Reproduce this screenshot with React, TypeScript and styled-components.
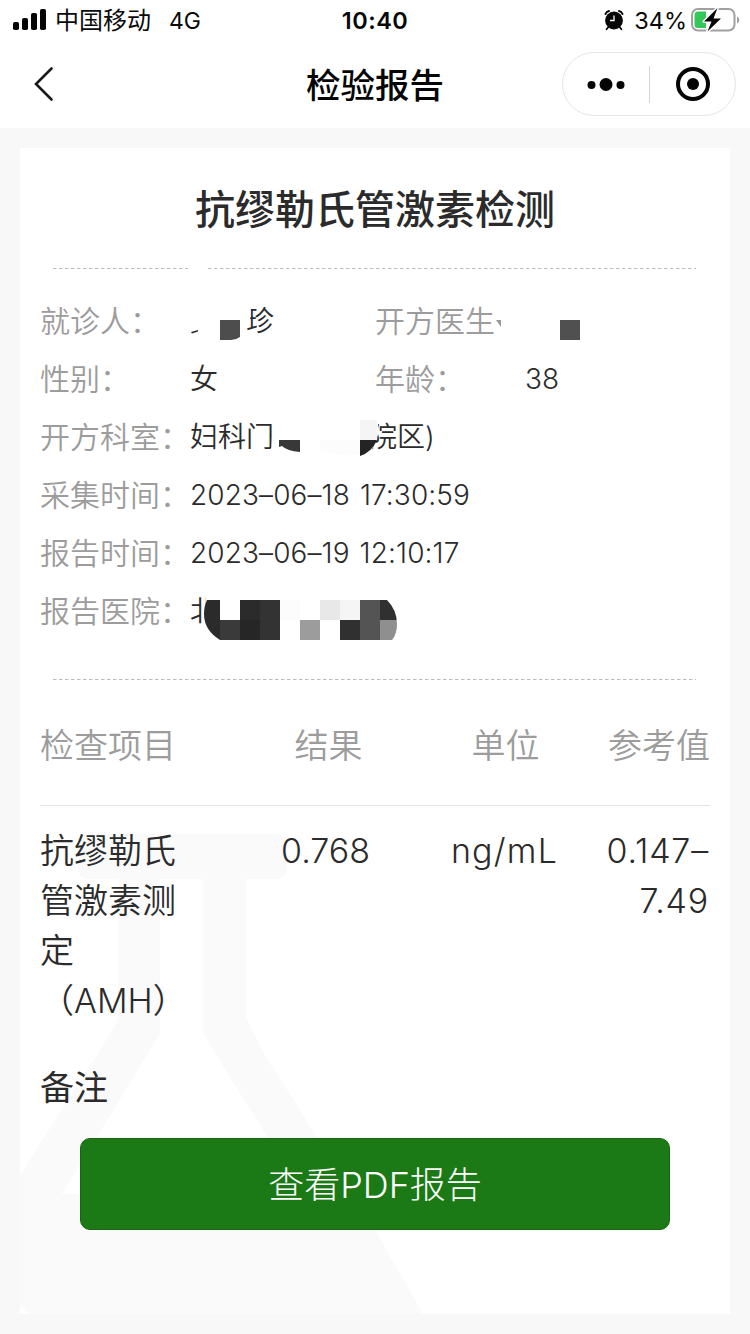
import React from "react";
import styled, { createGlobalStyle } from "styled-components";

const GlobalStyle = createGlobalStyle`
  * { box-sizing: border-box; }
  body {
    margin: 0;
    background: #f8f8f8;
    font-family: Inter, "Noto Sans CJK SC", sans-serif;
    color: #2b2b2b;
  }
`;

const Page = styled.div`
  width: 750px;
  height: 1334px;
  overflow: hidden;
  background: #f8f8f8;
`;

const Header = styled.header`
  height: 128px;
  background: #fff;
`;

const StatusBar = styled.div`
  display: grid;
  grid-template-columns: 1fr auto 1fr;
  align-items: center;
  height: 40px;
  padding: 0 10px 0 13px;
  color: #0a0a0a;
  font-size: 24px;
  line-height: 40px;
`;

const StatusSide = styled.div<{ $end?: boolean }>`
  display: flex;
  align-items: center;
  justify-content: ${(p) => (p.$end ? "flex-end" : "flex-start")};
`;

const Carrier = styled.span`
  margin: 0 18px 0 8px;
  padding-top: 2px;
  line-height: 38px;
`;

const Network = styled.span`
  padding-top: 2px;
  font-size: 23px;
  line-height: 38px;
`;

const Clock = styled.span`
  padding: 2px 3px 0 0;
  font-size: 23.5px;
  line-height: 38px;
  font-weight: 600;
  letter-spacing: 0.5px;
`;

const Percent = styled.span`
  margin: 0 4px 0 10px;
  padding-top: 2px;
  font-size: 23.5px;
  line-height: 38px;
`;

const NavBar = styled.nav`
  display: grid;
  grid-template-columns: 188px 1fr 188px;
  align-items: center;
  height: 88px;
`;

const BackButton = styled.button`
  display: flex;
  width: 60px;
  margin-left: 30px;
  padding: 0;
  border: 0;
  background: none;
`;

const NavTitle = styled.h1`
  margin: 0;
  padding-top: 3px;
  text-align: center;
  font-size: 34.5px;
  line-height: 48px;
  font-weight: 500;
  color: #060606;
`;

const Capsule = styled.div`
  display: flex;
  align-items: center;
  width: 174px;
  height: 64px;
  border: 1px solid #e6e6e6;
  border-radius: 32px;
`;

const CapsuleAction = styled.div<{ $width: number }>`
  display: flex;
  justify-content: center;
  width: ${(p) => p.$width}px;
`;

const CapsuleDivider = styled.div`
  width: 1px;
  height: 37px;
  background: #d6d6d6;
`;

const Card = styled.main`
  position: relative;
  display: flex;
  flex-direction: column;
  width: 710px;
  height: 1166px;
  margin: 20px 20px 0;
  padding: 0 20px;
  background: #fff;
`;

const Watermark = styled.svg`
  position: absolute;
  left: 0;
  bottom: 0;
`;

const ReportTitle = styled.h2`
  margin: 0;
  height: 120px;
  padding-top: 33px;
  text-align: center;
  font-size: 40px;
  line-height: 58px;
  font-weight: 500;
  color: #2b2b2b;
`;

const Divider = styled.svg`
  display: block;
  margin-left: 13px;
`;

const InfoList = styled.section`
  height: 410px;
  padding-top: 23px;
`;

const InfoRow = styled.div`
  display: flex;
  height: 58px;
  line-height: 58px;
`;

const Field = styled.div<{ $width?: number }>`
  display: flex;
  width: ${(p) => (p.$width ? p.$width + "px" : "auto")};
`;

const Label = styled.span`
  position: relative;
  flex: none;
  width: 150px;
  font-size: 30px;
  font-weight: 350;
  color: #9c9c9c;
`;

const Value = styled.span<{ $indent?: number; $stamp?: boolean }>`
  position: relative;
  padding-left: ${(p) => p.$indent ?? 0}px;
  font-size: 28px;
  font-weight: 350;
  letter-spacing: ${(p) => (p.$stamp ? 0.1 : 0)}px;
  word-spacing: ${(p) => (p.$stamp ? 2 : 0)}px;
  white-space: pre;
`;

const Mask = styled.svg`
  position: absolute;
  left: 0;
  top: 0;
`;

const TableHead = styled.div`
  display: grid;
  grid-template-columns: 200px 177px 177px 116px;
  height: 126px;
  padding-top: 41px;
  border-bottom: 1px solid #e4e4e4;
  font-size: 34px;
  line-height: 50px;
  font-weight: 350;
  color: #9c9c9c;
`;

const TableRow = styled.div`
  position: relative;
  display: grid;
  grid-template-columns: 200px 171px 187px 111px;
  height: 220px;
  padding-top: 20px;
  font-size: 34px;
  line-height: 50px;
  font-weight: 350;
`;

const Cell = styled.div<{ $align?: string; $spacing?: number }>`
  text-align: ${(p) => p.$align ?? "left"};
  padding-right: ${(p) => (p.$align ? 0 : 50)}px;
  letter-spacing: ${(p) => p.$spacing ?? 0}px;
`;

const Remark = styled.div`
  position: relative;
  height: 112px;
  padding-top: 37px;
  font-size: 34px;
  line-height: 50px;
`;

const PdfButton = styled.button`
  position: relative;
  flex: none;
  width: 590px;
  height: 92px;
  margin-left: 40px;
  padding: 0 0 4px;
  border: 1px solid #1b6417;
  border-radius: 10px;
  background: #1b7a15;
  color: #fff;
  font-family: inherit;
  font-size: 36px;
  font-weight: 300;
`;

const SignalIcon = () => (
  <svg width="34" height="22" viewBox="0 0 34 22" fill="#050505">
    <rect x="0" y="13" width="6" height="8" rx="1.8" />
    <rect x="9" y="9" width="6" height="12" rx="1.8" />
    <rect x="18" y="4" width="6" height="17" rx="1.8" />
    <rect x="27" y="0" width="6" height="21" rx="1.8" />
  </svg>
);

const AlarmIcon = () => (
  <svg width="20" height="22" viewBox="0 0 20 22">
    <circle cx="10" cy="11.5" r="8.9" fill="#080808" />
    <path d="M1.500 5a5 5 0 0 1 3.500-3M18.500 5a5 5 0 0 0-3.500-3" stroke="#080808" strokeWidth="2" fill="none" strokeLinecap="round" />
    <path d="M4.400 18 2.600 20.200M15.600 18l1.800 2.200" stroke="#080808" strokeWidth="1.800" strokeLinecap="round" />
    <path d="M10 6.500v5H6" stroke="#fff" strokeWidth="1.300" fill="none" />
  </svg>
);

const BatteryIcon = () => (
  <svg width="49" height="28" viewBox="0 0 49 28">
    <rect x="1" y="3" width="42.5" height="21.5" rx="6" fill="none" stroke="#a0a0a0" strokeWidth="2" />
    <path d="M46 10.500c3 1.200 3 5.800 0 7z" fill="#a0a0a0" />
    <path d="M7 5.600h8v16.400H7a3.500 3.500 0 0 1-3.500-3.500V9a3.500 3.500 0 0 1 3.500-3.400z" fill="#34c759" />
    <path d="M26.500 2 13 15.500h7.500L16.500 25.500 30 12.500h-7.500z" fill="#050505" stroke="#fff" strokeWidth="3" paintOrder="stroke" strokeLinejoin="round" />
  </svg>
);

const DashedDivider = ({ gap }: { gap?: boolean }) => (
  <Divider width="643" height="1" viewBox="0 0 643 1">
    <path
      d={gap ? "M0 .5H135M155 .5H643" : "M0 .5H643"}
      stroke="#bcbcbc"
      strokeDasharray="3.500 2.500"
    />
  </Divider>
);

const tiles: [number, number, string][] = [
  [10, 0, "#2b2b2b"], [50, 0, "#2b2b2b"], [70, 0, "#333"], [90, 0, "#fcfcfc"],
  [130, 0, "#e8e8e8"], [150, 0, "#f5f5f5"], [170, 0, "#545454"], [190, 0, "#303030"],
  [10, 20, "#2b2b2b"], [30, 20, "#3a3a3a"], [50, 20, "#262626"], [70, 20, "#333"],
  [110, 20, "#9c9c9c"], [150, 20, "#303030"], [170, 20, "#545454"], [190, 20, "#8f8f8f"],
];

export default function App() {
  return (
    <Page>
      <GlobalStyle />
      <Header>
        <StatusBar>
          <StatusSide>
            <SignalIcon />
            <Carrier>中国移动</Carrier>
            <Network>4G</Network>
          </StatusSide>
          <Clock>10:40</Clock>
          <StatusSide $end>
            <AlarmIcon />
            <Percent>34%</Percent>
            <BatteryIcon />
          </StatusSide>
        </StatusBar>
        <NavBar>
          <BackButton aria-label="返回">
            <svg width="26" height="36" viewBox="0 0 26 36">
              <path d="M21.500 2.500 6 18 21.500 33.500" fill="none" stroke="#1a1a1a" strokeWidth="2.600" strokeLinecap="round" />
            </svg>
          </BackButton>
          <NavTitle>检验报告</NavTitle>
          <Capsule>
            <CapsuleAction $width={86}>
              <svg width="38" height="14" viewBox="0 0 38 14" fill="#050505">
                <circle cx="4.500" cy="8" r="4" />
                <circle cx="19" cy="7.500" r="6.500" />
                <circle cx="33.500" cy="8" r="4" />
              </svg>
            </CapsuleAction>
            <CapsuleDivider />
            <CapsuleAction $width={85}>
              <svg width="36" height="36" viewBox="0 0 36 36">
                <circle cx="18" cy="18" r="15" fill="none" stroke="#050505" strokeWidth="4" />
                <circle cx="18" cy="18" r="6" fill="#050505" />
              </svg>
            </CapsuleAction>
          </Capsule>
        </NavBar>
      </Header>

      <Card>
        <Watermark width="410" height="480" viewBox="20 834 410 480">
          <path
            fill="#fafafa"
            fillRule="evenodd"
            d="M90 834H275Q287 834 287 846V867Q287 879 275 879H246V1018L262 1050L315 1134L375 1230L423 1314H30L20 1304V1175L100 1050L118 1020V879H90Q78 879 78 867V846Q78 834 90 834ZM160 879V1034L62 1194H303L213 1050L203 1032V879Z"
          />
        </Watermark>
        <ReportTitle>抗缪勒氏管激素检测</ReportTitle>
        <DashedDivider gap />
        <InfoList>
          <InfoRow>
            <Field $width={335}>
              <Label>就诊人：</Label>
              <Value $indent={56}>
                珍
                <Mask width="90" height="58" viewBox="0 0 90 58">
                  <path d="M54 10h9l-2 6-1 14-3 5h-3z" fill="#fff" />
                  <path d="M1 40l7-2v1.500l-6 2z" fill="#2b2b2b" />
                  <path d="M30 28H50V45Q46 48 41 48H30z" fill="#4d4d4d" />
                </Mask>
              </Value>
            </Field>
            <Field>
              <Label>
                开方医生
                <Mask width="150" height="58" viewBox="0 0 150 58">
                  <path d="M121 28h5v7z" fill="#999" />
                </Mask>
              </Label>
              <Value>
                <Mask width="70" height="58" viewBox="0 0 70 58">
                  <rect x="35" y="28" width="20" height="20" fill="#505050" />
                </Mask>
              </Value>
            </Field>
          </InfoRow>
          <InfoRow>
            <Field $width={335}>
              <Label>性别：</Label>
              <Value>女</Value>
            </Field>
            <Field>
              <Label>年龄：</Label>
              <Value>38</Value>
            </Field>
          </InfoRow>
          <InfoRow>
            <Label>开方科室：</Label>
            <Value>
              妇科门
              <Value $indent={95}>院区)</Value>
              <Mask width="250" height="58" viewBox="0 0 250 58">
                <path d="M83 10h8v38h-10z" fill="#fff" />
                <path d="M170 12h17q3 10 0 18l-6 14h-11z" fill="#fff" />
                <path d="M170 12h17v20h-17z" fill="#f5f5f5" />
                <path d="M89 32h21v12Q97 43 92 38l-3 1z" fill="#383838" />
                <path d="M130 32h40v15q-20 2-40-5z" fill="#fcfcfc" />
                <path d="M170 32h17q-5 12-17 16z" fill="#242424" />
              </Mask>
            </Value>
          </InfoRow>
          <InfoRow>
            <Label>采集时间：</Label>
            <Value $stamp>2023–06–18 17:30:59</Value>
          </InfoRow>
          <InfoRow>
            <Label>报告时间：</Label>
            <Value $stamp>2023–06–19 12:10:17</Value>
          </InfoRow>
          <InfoRow>
            <Label>报告医院：</Label>
            <Value>
              北
              <Mask width="220" height="58" viewBox="0 -18 220 58">
                <defs>
                  <clipPath id="pill">
                    <path d="M17 0H197Q207 10 207 24Q207 34 202 40H30Q14 30 14 14Q14 6 17 0z" />
                  </clipPath>
                </defs>
                <path d="M16-14h20V30H16z" fill="#fff" />
                <g clipPath="url(#pill)" shapeRendering="crispEdges">
                  {tiles.map(([x, y, fill]) => (
                    <rect key={`${x}-${y}`} x={x} y={y} width="20" height="20" fill={fill} />
                  ))}
                </g>
              </Mask>
            </Value>
          </InfoRow>
        </InfoList>
        <DashedDivider />
        <TableHead>
          <Cell>检查项目</Cell>
          <Cell $align="center">结果</Cell>
          <Cell $align="center">单位</Cell>
          <Cell $align="right">参考值</Cell>
        </TableHead>
        <TableRow>
          <Cell>抗缪勒氏管激素测定（AMH）</Cell>
          <Cell $align="center">0.768</Cell>
          <Cell $align="center" $spacing={1.2}>ng/mL</Cell>
          <Cell $align="right" $spacing={0.8}>0.147–7.49</Cell>
        </TableRow>
        <Remark>备注</Remark>
        <PdfButton>查看PDF报告</PdfButton>
      </Card>
    </Page>
  );
}
